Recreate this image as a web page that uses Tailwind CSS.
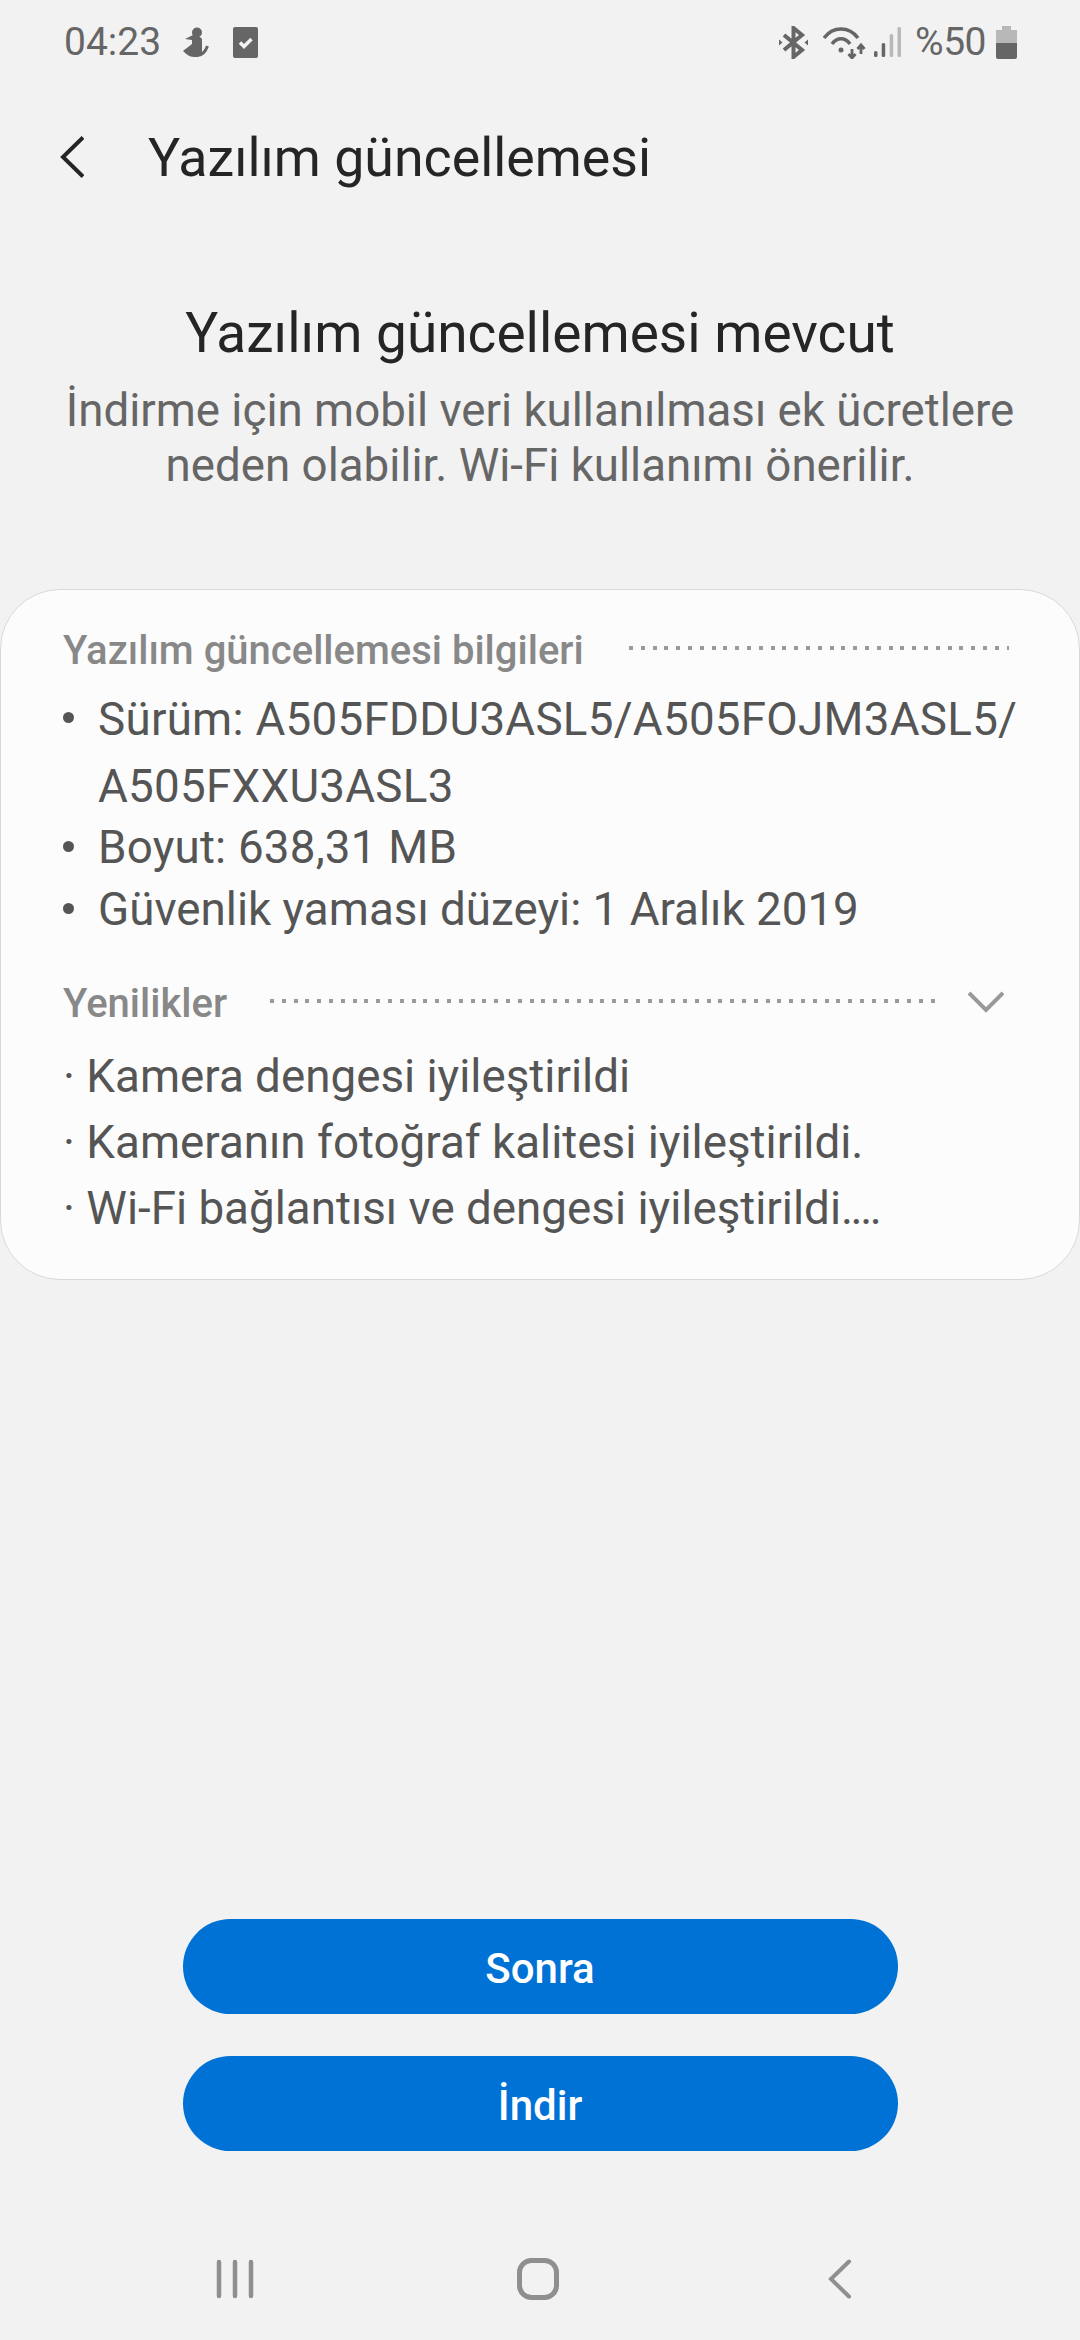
<!DOCTYPE html>
<html lang="tr">
<head>
    <meta charset="UTF-8">
    <meta name="viewport" content="width=device-width, initial-scale=1.0">
    <title>Yazılım güncellemesi</title>
    <script src="https://cdn.jsdelivr.net/npm/@tailwindcss/browser@4"></script>
</head>
<body class="bg-[#f2f2f2] font-['Roboto',sans-serif]">
    <div class="w-[1080px] h-[2340px] flex flex-col overflow-hidden">

        <!-- status bar -->
        <div class="h-[84px] flex items-center pl-[64px] pr-[63px] text-[#666666] text-[39px] shrink-0">
            <span class="w-[119px]">04:23</span>
            <svg class="w-[26px] h-[30px]" viewBox="0 0 26 30" fill="#666666">
                <circle cx="14" cy="5.5" r="5"/>
                <path d="M10 8 L2 12 L9 13 L9 17 L0 24 L8 27 L19 27 L19 12 L17 10 Z"/>
                <path d="M1.5 23 Q6 29 13 28.5 Q21 29 24.5 19" fill="none" stroke="#666666" stroke-width="3"/>
            </svg>
            <svg class="w-[25px] h-[31px] ml-[24px]" viewBox="0 0 25 31">
                <rect width="25" height="31" rx="2" fill="#666666"/>
                <path d="M7 15.5 L11 19.5 L18.5 12" fill="none" stroke="#f2f2f2" stroke-width="3.5"/>
            </svg>
            <div class="flex-1"></div>
            <svg class="w-[29px] h-[33px]" viewBox="0 0 29 33" fill="none" stroke="#666666" stroke-width="4">
                <path d="M5 9 L23 24 L14.5 31 V2 L23 9 L5 24"/>
                <path d="M0 13.5 L3.5 16.5 L0 19.5 Z M29 13.5 L25.5 16.5 L29 19.5 Z" fill="#666666" stroke="none"/>
            </svg>
            <svg class="w-[43px] h-[33px] ml-[15px]" viewBox="0 0 43 33" fill="none" stroke="#666666" stroke-width="3.5">
                <path d="M1 12 C10 0 26 0 35 12"/>
                <path d="M9 18 C14 11 22 11 27 18"/>
                <circle cx="18" cy="24" r="2.5" fill="#666666" stroke="none"/>
                <path d="M29 23 V32 M25.5 28 L29 32 L32.5 28" stroke-width="2.8"/>
                <path d="M38 28 V19 M34.5 23 L38 19 L41.5 23" stroke-width="2.8"/>
            </svg>
            <svg class="w-[27px] h-[30px] ml-[8px]" viewBox="0 0 27 30">
                <rect x="0" y="24" width="3.5" height="6" rx="1.5" fill="#666666"/>
                <rect x="7.7" y="16" width="3.5" height="14" rx="1.5" fill="#666666"/>
                <rect x="15.7" y="7" width="3.5" height="23" rx="1.5" fill="#b8b8b8"/>
                <rect x="23.5" y="0" width="3.5" height="30" rx="1.5" fill="#b8b8b8"/>
            </svg>
            <span class="ml-[14px] tracking-[-0.5px]">%50</span>
            <svg class="w-[21px] h-[33px] ml-[10px]" viewBox="0 0 21 33">
                <path d="M6 0 H15 V4 H21 V17 H0 V4 H6 Z" fill="#b8b8b8"/>
                <path d="M0 17 H21 V31 Q21 33 19 33 H2 Q0 33 0 31 Z" fill="#666666"/>
            </svg>
        </div>

        <!-- header -->
        <div class="h-[148px] flex items-center shrink-0 pl-[60px]">
            <svg class="w-[24px] h-[42px] mb-[3px]" viewBox="0 0 24 42" fill="none" stroke="#252525" stroke-width="4">
                <path d="M23 1.5 L3 21 L23 40.5"/>
            </svg>
            <h1 class="ml-[64px] text-[53.7px] text-[#252525] leading-none">Yazılım güncellemesi</h1>
        </div>

        <!-- intro -->
        <div class="text-center pt-[71px] shrink-0">
            <h2 class="text-[55px] leading-[60px] text-[#252525]">Yazılım güncellemesi mevcut</h2>
            <p class="mt-[20px] text-[45.7px] leading-[55px] text-[#666666]">İndirme için mobil veri kullanılması ek ücretlere<br>neden olabilir. Wi-Fi kullanımı önerilir.</p>
        </div>

        <div class="flex-1 max-h-[96px]"></div>

        <!-- info card -->
        <div class="h-[691px] shrink-0 bg-[#fcfcfc] border border-[#d9d9d9] rounded-[60px] pl-[62px] pr-[70px] pt-[36px]">
            <div class="flex items-center h-[50px]">
                <span class="text-[40px] font-medium text-[#888888] leading-none">Yazılım güncellemesi bilgileri</span>
                <div class="flex-1 ml-[45px] h-[4px] -translate-y-[3px] bg-[repeating-linear-gradient(90deg,#9a9a9a_0,#9a9a9a_4px,transparent_4px,transparent_11.8px)]"></div>
            </div>
            <ul class="mt-[10px] text-[45.76px] text-[#555555]">
                <li class="flex leading-[67px]">
                    <span class="h-[11px] w-[11px] mt-[26px] mr-[24px] rounded-full bg-[#555555] shrink-0"></span>
                    <span class="whitespace-nowrap tracking-[0.25px]">Sürüm: A505FDDU3ASL5/A505FOJM3ASL5/<br>A505FXXU3ASL3</span>
                </li>
                <li class="flex leading-[62px] -mt-[3px]">
                    <span class="h-[11px] w-[11px] mt-[24px] mr-[24px] rounded-full bg-[#555555] shrink-0"></span>
                    <span class="tracking-[0.2px]">Boyut: 638,31 MB</span>
                </li>
                <li class="flex leading-[62px]">
                    <span class="h-[11px] w-[11px] mt-[24px] mr-[24px] rounded-full bg-[#555555] shrink-0"></span>
                    <span>Güvenlik yaması düzeyi: 1 Aralık 2019</span>
                </li>
            </ul>
            <div class="flex items-center h-[50px] mt-[38px]">
                <span class="text-[40px] font-medium text-[#888888] leading-none">Yenilikler</span>
                <div class="flex-1 ml-[43px] h-[4px] -translate-y-[3px] bg-[repeating-linear-gradient(90deg,#9a9a9a_0,#9a9a9a_4px,transparent_4px,transparent_11.8px)]"></div>
                <svg class="w-[36px] h-[22px] ml-[33px] mr-[5px] -mt-[4px]" viewBox="0 0 36 22" fill="none" stroke="#999999" stroke-width="4">
                    <path d="M1 2 L18 19 L35 2"/>
                </svg>
            </div>
            <div class="mt-[15px] text-[45.76px] leading-[66px] text-[#555555]">
                <p>· Kamera dengesi iyileştirildi</p>
                <p>· Kameranın fotoğraf kalitesi iyileştirildi.</p>
                <p>· Wi-Fi bağlantısı ve dengesi iyileştirildi<span class="tracking-[-2.5px]">....</span></p>
            </div>
        </div>

        <!-- buttons -->
        <div class="flex-1"></div>
        <div class="flex flex-col items-center gap-[42px] shrink-0">
            <button class="w-[715px] h-[95px] pt-[3px] rounded-full bg-[#0072d6] text-white text-[42px] font-medium">Sonra</button>
            <button class="w-[715px] h-[95px] pt-[3px] rounded-full bg-[#0072d6] text-white text-[42px] font-medium">İndir</button>
        </div>

        <!-- nav bar -->
        <div class="h-[189px] shrink-0 flex items-start justify-between pl-[216px] pr-[228px] pt-[108px]">
            <svg class="w-[38px] h-[40px]" viewBox="0 0 38 40" stroke="#8f8f8f" stroke-width="4.5" stroke-linecap="round">
                <path d="M3 3 V37 M19 3 V37 M35 3 V37"/>
            </svg>
            <svg class="w-[42px] h-[42px] -mt-[1px] -translate-x-[3px]" viewBox="0 0 42 42" fill="none" stroke="#8f8f8f" stroke-width="5">
                <rect x="2.5" y="2.5" width="37" height="37" rx="12"/>
            </svg>
            <svg class="w-[24px] h-[40px]" viewBox="0 0 24 40" fill="none" stroke="#8f8f8f" stroke-width="4" stroke-linecap="round">
                <path d="M21 2.5 L3 20 L21 37.5"/>
            </svg>
        </div>
    </div>
</body>
</html>
